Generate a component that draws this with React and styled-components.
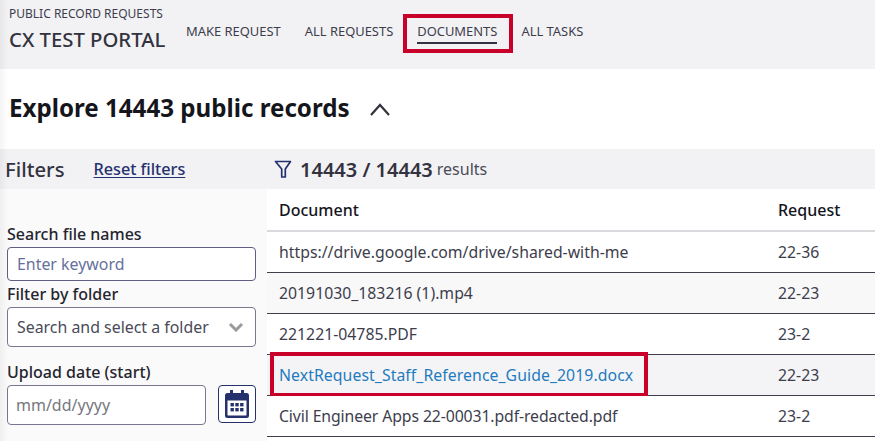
import React from "react";
import styled, { createGlobalStyle } from "styled-components";

const Global = createGlobalStyle`
  html, body { margin: 0; padding: 0; background: #fff; }
  body { font-family: "Noto Sans", "Open Sans", sans-serif; color: #33333f; overflow: hidden; }
  * { box-sizing: border-box; }
`;

const Page = styled.div`
  width: 875px;
  height: 441px;
  overflow: hidden;
  position: relative;
`;

const EdgeShade = styled.div`
  position: absolute;
  top: 0; left: 0; bottom: 0;
  width: 8px;
  background: linear-gradient(to right, rgba(0,0,0,0.045), rgba(0,0,0,0));
  pointer-events: none;
`;

const Header = styled.header`
  height: 69px;
  background: #f2f2f5;
  display: flex;
  align-items: flex-start;
  padding-left: 9px;
`;

const Brand = styled.div`
  width: 177px;
  padding-top: 6px;
`;

const BrandTop = styled.div`
  font-size: 12px;
  line-height: 16px;
  color: #3d3d4c;
`;

const BrandName = styled.div`
  font-size: 20.3px;
  line-height: 26px;
  margin-top: 4px;
  font-weight: 500;
  color: #33333f;
`;

const Nav = styled.nav`
  display: flex;
  gap: 24px;
  padding-top: 23px;
`;

const NavLink = styled.a`
  position: relative;
  font-size: 12.93px;
  line-height: 17px;
  height: 23px;
  color: #3d3d4c;
  white-space: nowrap;
  ${(p) => p.$active && `&::before { content: ""; position: absolute; left: 0; right: 0; top: 19px; height: 2px; background: #33333f; }`}
`;

const Highlight = styled.span`
  position: absolute;
  border: 4px solid #c8002a;
  pointer-events: none;
`;

const NavHighlight = styled(Highlight)`
  left: -14px; right: -16px; top: -9px; bottom: -7px;
`;

const TitleBar = styled.div`
  height: 80px;
  display: flex;
  align-items: center;
  padding-left: 9px;
  gap: 19px;
`;

const Title = styled.h1`
  margin: 0;
  font-size: 24.15px;
  line-height: 30px;
  font-weight: 700;
  color: #15151c;
  position: relative;
  top: -1px;
`;

const FilterBar = styled.div`
  height: 40px;
  background: #f2f2f5;
  display: flex;
  align-items: center;
`;

const FiltersHead = styled.div`
  width: 267px;
  display: flex;
  align-items: center;
  padding-left: 5px;
`;

const FiltersTitle = styled.span`
  font-size: 20.3px;
  font-weight: 500;
  color: #33333f;
`;

const Reset = styled.a`
  margin-left: 29px;
  font-size: 16.2px;
  font-weight: 500;
  color: #25316d;
  text-decoration: underline;
  text-underline-offset: 2px;
`;

const Results = styled.div`
  display: flex;
  align-items: center;
  padding-left: 7px;
  gap: 8px;
`;

const Count = styled.span`
  font-size: 20px;
  font-weight: 600;
  color: #33333f;
`;

const ResultsWord = styled.span`
  font-size: 16px;
  color: #4a4a58;
  margin-left: -4px;
`;

const Body = styled.div`
  display: flex;
  height: 252px;
`;

const Sidebar = styled.aside`
  width: 267px;
  background: #fafafa;
  padding: 35px 11px 0 7px;
`;

const Label = styled.label`
  display: block;
  font-size: 16px;
  line-height: 20px;
  font-weight: 500;
  color: #25252f;
`;

const TextInput = styled.div`
  height: 34px;
  margin: 3px 0;
  border: 1px solid #5d5d86;
  border-radius: 4px;
  background: #fff;
  padding-left: 9px;
  font-size: 15.9px;
  line-height: 32px;
  color: #66709c;
`;

const Select = styled.div`
  height: 40px;
  margin: 3px 0 15px;
  border: 1px solid #77778f;
  border-radius: 4px;
  background: #fff;
  padding: 0 11px 0 9px;
  display: flex;
  align-items: center;
  justify-content: space-between;
  font-size: 15.9px;
  color: #4a4a58;
`;

const DateRow = styled.div`
  display: flex;
  gap: 12px;
  margin-top: 3px;
`;

const DateInput = styled.div`
  width: 199px;
  height: 40px;
  border: 1px solid #77778f;
  border-radius: 4px;
  background: #fff;
  padding-left: 8px;
  font-size: 16px;
  line-height: 38px;
  color: #77777f;
`;

const CalendarButton = styled.button`
  width: 38px;
  height: 38px;
  padding: 0;
  border: 1px solid #25316d;
  border-radius: 4px;
  background: #fff;
  display: flex;
  align-items: center;
  justify-content: center;
`;

const Table = styled.div`
  flex: 1;
  background: #fff;
`;

const Grid = styled.div`
  display: grid;
  grid-template-columns: 499px 1fr;
  align-items: center;
  padding-left: 12px;
`;

const HeadRow = styled(Grid)`
  height: 43px;
  border-bottom: 2px solid #d9d9de;
  font-size: 16px;
  font-weight: 500;
  color: #15151c;
`;

const Row = styled(Grid)`
  position: relative;
  height: 41px;
  border-bottom: 1px solid #3f3f50;
  font-size: 15.8px;
  color: #3d3d4c;
  background: ${(p) => (p.$shade ? p.$shade : "#fff")};
`;

const Cell = styled.div`
  white-space: nowrap;
  letter-spacing: ${(p) => p.$track || 0}px;
`;

const DocLink = styled.a`
  color: #1f7bbd;
`;

const RowHighlight = styled(Highlight)`
  left: 3px; top: -3px; width: 378px; height: 45px;
`;

const Filter = () => (
  <svg width="18" height="20" viewBox="0 0 18 20" fill="none" stroke="#25316d" strokeWidth="1.7" strokeLinejoin="round">
    <path d="M1.500 2.500h15L11.300 10v8H7.700v-8z" />
  </svg>
);

const Chevron = () => (
  <svg width="22" height="14" viewBox="0 0 22 14" fill="none" stroke="#33333f" strokeWidth="2.2">
    <path d="M2 13l9-10 9 10" />
  </svg>
);

const Down = () => (
  <svg width="16" height="10" viewBox="0 0 16 10" fill="none" stroke="#9a9a9f" strokeWidth="3">
    <path d="M2 2l6 6 6-6" />
  </svg>
);

const Calendar = () => (
  <svg width="24" height="28" viewBox="0 0 24 28">
    <path fill="#25316d" fillRule="evenodd" d="M5 0h3v3h8V0h3v3h2.500A2.500 2.500 0 0 1 24 5.500v20a2.500 2.500 0 0 1-2.500 2.500h-19A2.500 2.500 0 0 1 0 25.500v-20A2.500 2.500 0 0 1 2.500 3H5zM2.500 10.500v14.500c0 .3.2.5.5.5h18c.3 0 .5-.2.5-.5V10.500z" />
    <g fill="#25316d">
      {[5.500, 10.300, 15.100].flatMap((x) =>
        [13, 18].map((y) => <rect key={x + "-" + y} x={x} y={y} width="3.400" height="3.400" />)
      )}
    </g>
  </svg>
);

const rows = [
  { doc: "https://drive.google.com/drive/shared-with-me", req: "22-36" },
  { doc: "20191030_183216 (1).mp4", req: "22-23", shade: "#f8f8f9" },
  { doc: "221221-04785.PDF", req: "23-2" },
  { doc: "NextRequest_Staff_Reference_Guide_2019.docx", req: "22-23", shade: "#f4f4f7", track: 0.07, marked: true },
  { doc: "Civil Engineer Apps 22-00031.pdf-redacted.pdf", req: "23-2", track: -0.11 },
];

export default function App() {
  return (
    <Page>
      <Global />
      <Header>
        <Brand>
          <BrandTop>PUBLIC RECORD REQUESTS</BrandTop>
          <BrandName>CX TEST PORTAL</BrandName>
        </Brand>
        <Nav>
          <NavLink>MAKE REQUEST</NavLink>
          <NavLink>ALL REQUESTS</NavLink>
          <NavLink $active>
            DOCUMENTS
            <NavHighlight />
          </NavLink>
          <NavLink>ALL TASKS</NavLink>
        </Nav>
      </Header>
      <TitleBar>
        <Title>Explore 14443 public records</Title>
        <Chevron />
      </TitleBar>
      <FilterBar>
        <FiltersHead>
          <FiltersTitle>Filters</FiltersTitle>
          <Reset>Reset filters</Reset>
        </FiltersHead>
        <Results>
          <Filter />
          <Count>14443 / 14443</Count>
          <ResultsWord>results</ResultsWord>
        </Results>
      </FilterBar>
      <Body>
        <Sidebar>
          <Label>Search file names</Label>
          <TextInput>Enter keyword</TextInput>
          <Label>Filter by folder</Label>
          <Select>
            Search and select a folder
            <Down />
          </Select>
          <Label>Upload date (start)</Label>
          <DateRow>
            <DateInput>mm/dd/yyyy</DateInput>
            <CalendarButton>
              <Calendar />
            </CalendarButton>
          </DateRow>
        </Sidebar>
        <Table>
          <HeadRow>
            <Cell>Document</Cell>
            <Cell>Request</Cell>
          </HeadRow>
          {rows.map(({ doc, req, shade, track, marked }) => (
            <Row key={doc} $shade={shade}>
              <Cell $track={track}>{marked ? <DocLink>{doc}</DocLink> : doc}</Cell>
              <Cell>{req}</Cell>
              {marked && <RowHighlight />}
            </Row>
          ))}
        </Table>
      </Body>
      <EdgeShade />
    </Page>
  );
}
